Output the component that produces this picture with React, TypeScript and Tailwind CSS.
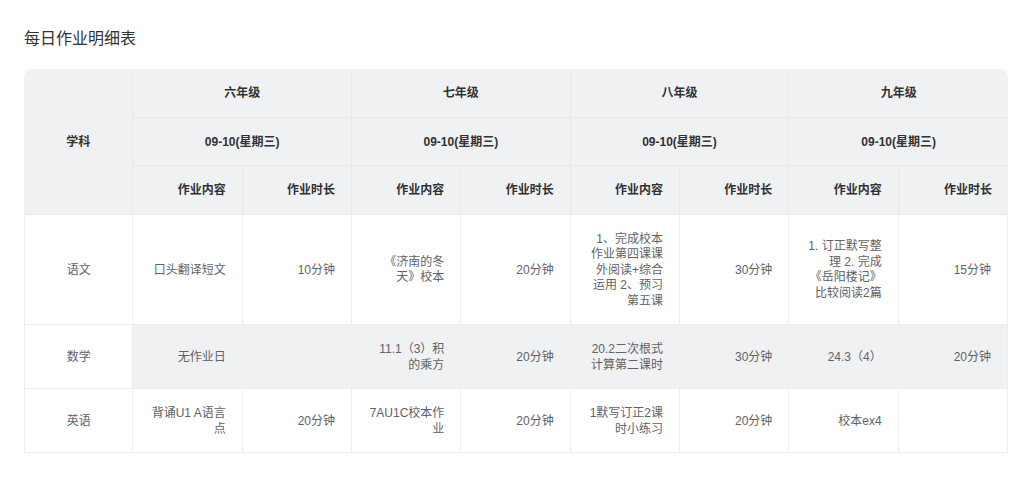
import React from "react";

const grades = ["六年级", "七年级", "八年级", "九年级"];

type Cell = [string, string];
const rows: { subject: string; cells: Cell[]; hover?: boolean }[] = [
  {
    subject: "语文",
    cells: [
      ["口头翻译短文", "10分钟"],
      ["《济南的冬天》校本", "20分钟"],
      ["1、完成校本作业第四课课外阅读+综合运用 2、预习第五课", "30分钟"],
      ["1. 订正默写整理 2. 完成《岳阳楼记》比较阅读2篇", "15分钟"],
    ],
  },
  {
    subject: "数学",
    hover: true,
    cells: [
      ["无作业日", ""],
      ["11.1（3）积的乘方", "20分钟"],
      ["20.2二次根式计算第二课时", "30分钟"],
      ["24.3（4）", "20分钟"],
    ],
  },
  {
    subject: "英语",
    cells: [
      ["背诵U1 A语言点", "20分钟"],
      ["7AU1C校本作业", "20分钟"],
      ["1默写订正2课时小练习", "20分钟"],
      ["校本ex4", ""],
    ],
  },
];

const th =
  "border-b border-[#e6e8eb] bg-[#f0f1f3] pt-[17px] pb-[15px] text-[12px] leading-[15.5px] font-bold text-[#303133] align-middle";
const td =
  "border-b border-r pl-[16.5px] pr-4 pt-[17px] pb-[15px] text-right align-middle text-[12px] leading-[15.5px] text-[#606266]";

export default function App() {
  return (
    <div
      className="min-h-screen bg-white px-6 pt-[27px]"
      style={{ fontFamily: '"Liberation Sans", "Noto Sans CJK SC", sans-serif' }}
    >
      <div className="mb-[18px] text-[16px] leading-6 text-[#303133]">每日作业明细表</div>
      <table className="w-[984px] table-fixed border-separate border-spacing-0">
        <colgroup>
          {Array.from({ length: 9 }).map((_, i) => (
            <col key={i} className="w-[109.33px]" />
          ))}
        </colgroup>
        <thead>
          <tr>
            <th rowSpan={3} className={th + " border-r rounded-tl-lg px-4 text-center"}>
              学科
            </th>
            {grades.map((g, i) => (
              <th
                key={g}
                colSpan={2}
                className={th + " px-4 text-center" + (i === 3 ? " rounded-tr-lg" : " border-r")}
              >
                {g}
              </th>
            ))}
          </tr>
          <tr>
            {grades.map((g, i) => (
              <th key={g} colSpan={2} className={th + " px-4 text-center" + (i === 3 ? "" : " border-r")}>
                09-10(星期三)
              </th>
            ))}
          </tr>
          <tr>
            {grades.map((g, i) => (
              <React.Fragment key={g}>
                <th className={th + " border-r pl-[16.5px] pr-4 text-right"}>作业内容</th>
                <th className={th + " pl-[16.5px] pr-4 text-right" + (i === 3 ? "" : " border-r")}>作业时长</th>
              </React.Fragment>
            ))}
          </tr>
        </thead>
        <tbody>
          {rows.map((r) => (
            <tr key={r.subject}>
              <td className="border-l border-r border-b border-[#ebedf0] bg-white px-4 pt-[17px] pb-[15px] text-center align-middle text-[12px] leading-[15.5px] text-[#606266]">
                {r.subject}
              </td>
              {r.cells.map(([content, dur], i) => (
                <React.Fragment key={i}>
                  <td
                    className={
                      td +
                      " " +
                      (r.hover ? "bg-[#f0f1f3] border-r-[#f0f1f3] border-b-[#ebedf0]" : "bg-white border-[#ebedf0]")
                    }
                  >
                    {content}
                  </td>
                  <td
                    className={
                      td +
                      " " +
                      (r.hover
                        ? "bg-[#f0f1f3] border-b-[#ebedf0] " + (i === 3 ? "border-r-[#ebedf0]" : "border-r-[#f0f1f3]")
                        : "bg-white border-[#ebedf0]")
                    }
                  >
                    {dur}
                  </td>
                </React.Fragment>
              ))}
            </tr>
          ))}
        </tbody>
      </table>
    </div>
  );
}
